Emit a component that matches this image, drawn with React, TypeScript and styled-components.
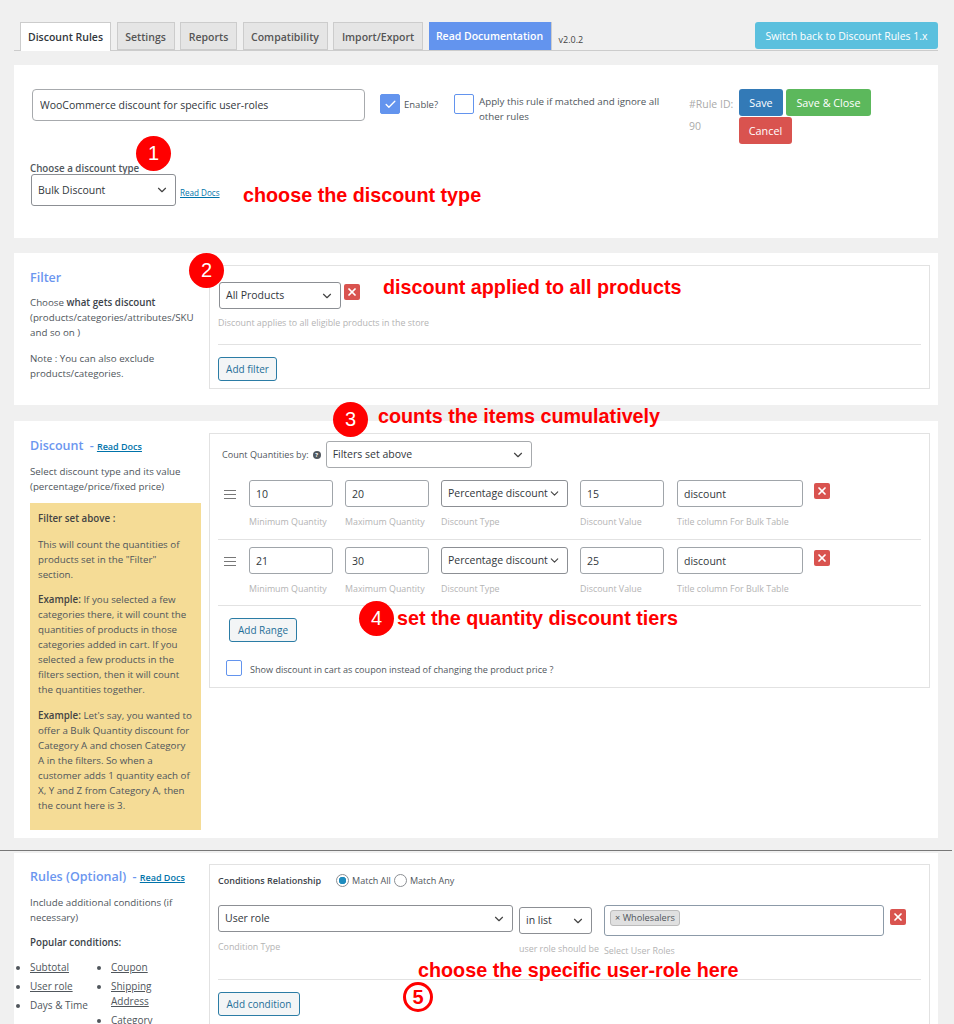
import React from 'react';
import styled, { createGlobalStyle } from 'styled-components';
import { ChevronDown, Check, X } from 'lucide-react';

/*----------- Styles ----------- */
const Global = createGlobalStyle`
  html, body {
    margin: 0;
    padding: 0;
    overflow: hidden;
    background: #f0f0f0;
  }
  * { box-sizing: border-box; }
`;

const Page = styled.div`
  position: relative;
  width: 954px;
  height: 1024px;
  overflow: hidden;
  padding: 22px 16px 0 14px;
  background: #f0f0f0;
  color: #50565c;
  font-family: "Open Sans", "Noto Sans", sans-serif;
  font-size: 9.75px;
  line-height: 15px;
`;

const TabBar = styled.div`
  display: flex;
  align-items: flex-start;
  height: 29px;
  padding-left: 6px;
  border-bottom: 1px solid #ccc;
`;

const Tab = styled.div<{ $active?: boolean; $w: number }>`
  width: ${(p) => p.$w}px;
  height: ${(p) => (p.$active ? 29 : 28)}px;
  margin-right: 5.5px;
  border: 1px solid #ccc;
  border-bottom: ${(p) => (p.$active ? 'none' : '1px solid #ccc')};
  background: ${(p) => (p.$active ? '#fff' : '#e5e5e5')};
  color: ${(p) => (p.$active ? '#32373c' : '#555')};
  font-weight: 600;
  font-size: 10.5px;
  line-height: 28px;
  text-align: center;
  white-space: nowrap;
`;

const DocTab = styled.div`
  width: 123px;
  height: 28px;
  background: #6394ee;
  border-right: 1px solid #ccc;
  color: #fff;
  font-weight: 600;
  font-size: 10.5px;
  line-height: 28px;
  text-align: center;
  white-space: nowrap;
`;

const Version = styled.div`
  margin: 10px 0 0 7px;
  font-size: 9px;
  color: #444;
`;

const SwitchButton = styled.div`
  margin-left: auto;
  width: 183px;
  height: 27px;
  background: #5bc0de;
  border-radius: 3px;
  color: #fff;
  font-size: 10.5px;
  line-height: 28px;
  text-align: center;
  white-space: nowrap;
`;

const Card = styled.section<{ $h: number; $top: number; $pad?: number }>`
  display: flex;
  align-items: flex-start;
  height: ${(p) => p.$h}px;
  margin-top: ${(p) => p.$top}px;
  padding: ${(p) => p.$pad ?? 12}px 8px 0 16px;
  background: #fff;
`;

const TopCard = styled.section`
  height: 173px;
  margin-top: 14px;
  padding: 24px 18px 0 16px;
  background: #fff;
`;

const TopRow = styled.div`
  display: flex;
  align-items: flex-start;
`;

const TitleInput = styled.input`
  width: 333px;
  height: 32px;
  margin-left: 2px;
  padding: 0 7px;
  border: 1px solid #a7aaad;
  border-radius: 4px;
  outline: none;
  color: #32373c;
  font: inherit;
  font-size: 10.5px;
`;

const Tick = styled.span<{ $on?: boolean; $size?: number }>`
  display: inline-flex;
  flex: none;
  align-items: center;
  justify-content: center;
  width: ${(p) => p.$size ?? 20}px;
  height: ${(p) => p.$size ?? 20}px;
  border: 1.5px solid #6394ee;
  border-radius: 2px;
  background: ${(p) => (p.$on ? '#6394ee' : '#fff')};
  color: #fff;
`;

const EnableWrap = styled.div`
  display: flex;
  align-items: center;
  gap: 4px;
  margin: 5px 0 0 15px;
  width: 74px;
  font-size: 9.5px;
`;

const ApplyWrap = styled.div`
  display: flex;
  gap: 5px;
  margin: 5px 0 0 0;
  width: 235px;
`;

const ApplyText = styled.div`
  width: 190px;
  margin-top: 1px;
  line-height: 14.5px;
`;

const RuleId = styled.div`
  width: 50px;
  color: #aaa;
  font-size: 10.5px;
  line-height: 22px;
  padding-top: 4px;
`;

const ActionGrid = styled.div`
  display: flex;
  flex-wrap: wrap;
  gap: 1px 3px;
  width: 140px;
`;

const ActionButton = styled.div<{ $bg: string; $w: number }>`
  width: ${(p) => p.$w}px;
  height: 27px;
  background: ${(p) => p.$bg};
  border-radius: 3px;
  color: #fff;
  font-size: 10.8px;
  line-height: 27px;
  text-align: center;
  white-space: nowrap;
`;

const TypeLabel = styled.div`
  margin-top: 17px;
  font-weight: 600;
  line-height: 15px;
`;

const TypeRow = styled.div`
  display: flex;
  align-items: center;
  margin: -2px 0 0 1px;
`;

const SelectBox = styled.div<{ $w: number; $h?: number; $grey?: boolean }>`
  display: flex;
  flex: none;
  align-items: center;
  justify-content: space-between;
  width: ${(p) => p.$w}px;
  height: ${(p) => p.$h ?? 27}px;
  padding: 0 6px;
  border: 1px solid ${(p) => (p.$grey ? '#a7aaad' : '#8c8f94')};
  border-radius: 3px;
  background: #fff;
  color: #32373c;
  font-size: 10.5px;
  white-space: nowrap;
  svg { flex: none; color: #444; }
`;

const DocLink = styled.a`
  color: #0073aa;
  font-size: 8.1px;
  text-decoration: underline;
`;

const TypeDocLink = styled(DocLink)`
  margin: 5px 0 0 4px;
`;

const LeftCol = styled.div`
  flex: none;
  width: 179px;
`;

const Heading = styled.h3<{ $top?: number }>`
  margin: ${(p) => p.$top ?? 4}px 0 0;
  color: #6b96ef;
  font-size: 12.5px;
  line-height: 18px;
  font-weight: 600;
  white-space: nowrap;
  span { margin-left: 3px; }
  a { font-size: 9px; }
`;

const Para = styled.p<{ $top?: number }>`
  margin: ${(p) => p.$top ?? 11}px 0 0;
  white-space: pre-line;
  b { font-weight: 600; color: #3c434a; }
`;

const Notice = styled.div`
  width: 171px;
  height: 327px;
  margin-top: 9px;
  padding: 8px 8px 0;
  background: #f5dc96;
  p { margin: 0 0 10.7px; }
  b { font-weight: 600; color: #444; }
`;

const Panel = styled.div<{ $h: number }>`
  flex: none;
  width: 721px;
  height: ${(p) => p.$h}px;
  padding: 0 8px;
  border: 1px solid #e2e2e2;
  background: #fff;
`;

const Hint = styled.div<{ $top?: number }>`
  margin-top: ${(p) => p.$top ?? 0}px;
  color: #b4b4b4;
  font-size: 8.9px;
  line-height: 14px;
  white-space: nowrap;
`;

const Divider = styled.div<{ $top: number }>`
  height: 1px;
  margin-top: ${(p) => p.$top}px;
  background: #e2e2e2;
`;

const OutlineButton = styled.div<{ $w: number; $top: number; $left?: number }>`
  width: ${(p) => p.$w}px;
  height: 24px;
  margin: ${(p) => p.$top}px 0 0 ${(p) => p.$left ?? 0}px;
  border: 1px solid #2b7ca5;
  border-radius: 3px;
  background: #f3f5f6;
  color: #1f6f98;
  font-size: 10px;
  line-height: 22px;
  text-align: center;
  white-space: nowrap;
`;

const RemoveButton = styled.div<{ $top?: number }>`
  display: flex;
  flex: none;
  align-items: center;
  justify-content: center;
  width: 16px;
  height: 16px;
  margin-top: ${(p) => p.$top ?? 0}px;
  border-radius: 2px;
  background: #d9534f;
  color: #fff;
`;

const FilterRow = styled.div`
  display: flex;
  align-items: flex-start;
  gap: 3px;
  margin: 16px 0 0 1px;
`;

const CountRow = styled.div`
  display: flex;
  align-items: center;
  margin: 7px 0 0 4px;
`;

const CountLabel = styled.div`
  font-size: 9.1px;
  white-space: nowrap;
`;

const HelpDot = styled.span`
  display: inline-flex;
  flex: none;
  align-items: center;
  justify-content: center;
  width: 8px;
  height: 8px;
  margin: 0 5px 0 4px;
  border-radius: 50%;
  background: #50575e;
  color: #fff;
  font-size: 6px;
  font-weight: 700;
  line-height: 8px;
`;

const RangeRow = styled.div<{ $top: number }>`
  display: flex;
  align-items: flex-start;
  margin-top: ${(p) => p.$top}px;
`;

const Grip = styled.div`
  flex: none;
  width: 12px;
  height: 9px;
  margin: 10px 13px 0 6px;
  border-top: 1px solid #777;
  border-bottom: 1px solid #777;
  position: relative;
  &::after {
    content: '';
    position: absolute;
    left: 0;
    right: 0;
    top: 3px;
    height: 1px;
    background: #777;
  }
`;

const Field = styled.div<{ $w: number; $gap?: number; $pad?: number }>`
  flex: none;
  width: ${(p) => p.$w}px;
  margin-right: ${(p) => p.$gap ?? 12}px;
  padding-top: ${(p) => p.$pad ?? 0}px;
`;

const ValueInput = styled.input`
  display: block;
  width: 100%;
  height: 27px;
  margin-bottom: 8px;
  padding: 0 6px;
  border: 1px solid #a0a5aa;
  border-radius: 3px;
  outline: none;
  color: #32373c;
  font: inherit;
  font-size: 10.5px;
`;

const RangeSelect = styled(SelectBox)`
  margin-bottom: 8px;
`;

const CouponRow = styled.div`
  display: flex;
  align-items: center;
  gap: 8px;
  margin: 17px 0 0 8px;
  font-size: 9.08px;
  span + span { padding-top: 3px; }
`;

const RelationRow = styled.div`
  display: flex;
  align-items: center;
  margin-top: 8px;
  height: 15px;
`;

const RelationLabel = styled.div`
  width: 118px;
  font-weight: 600;
  font-size: 9px;
  color: #3c434a;
  white-space: nowrap;
`;

const Radio = styled.span<{ $on?: boolean }>`
  flex: none;
  width: 13px;
  height: 13px;
  margin-right: 3px;
  border: 1px solid #8c8f94;
  border-radius: 50%;
  background: ${(p) => (p.$on ? 'radial-gradient(circle, #1e8cbe 0 3.5px, #fff 4px)' : '#fff')};
`;

const RadioText = styled.span`
  font-size: 9.05px;
  margin-right: 3px;
  white-space: nowrap;
`;

const ConditionRow = styled.div`
  display: flex;
  align-items: flex-start;
  margin-top: 17px;
`;

const Multi = styled.div`
  width: 280px;
  height: 31px;
  padding: 4px 5px;
  border: 1px solid #8c9aa8;
  border-radius: 3px;
`;

const Chip = styled.span`
  display: inline-block;
  height: 16px;
  padding: 0 4px;
  border: 1px solid #bbb;
  border-radius: 3px;
  background: #e0e0e0;
  font-size: 9.2px;
  line-height: 14px;
`;

const ColumnList = styled.div`
  display: flex;
  margin-top: 10px;
`;

const Bullets = styled.ul<{ $w: number }>`
  width: ${(p) => p.$w}px;
  margin: 0;
  padding: 0;
  font-size: 10px;
  line-height: 14.5px;
  list-style: disc;
  li { margin-bottom: 4.5px; }
  a { color: #50565c; text-decoration: underline; }
`;

const Annotation = styled.div<{ $x: number; $y: number }>`
  position: absolute;
  left: ${(p) => p.$x}px;
  top: ${(p) => p.$y}px;
  color: #f00;
  font-family: "Liberation Sans", Arial, sans-serif;
  font-size: 19.75px;
  font-weight: 700;
  line-height: 24px;
  white-space: nowrap;
`;

const Badge = styled.div<{ $x: number; $y: number }>`
  position: absolute;
  left: ${(p) => p.$x}px;
  top: ${(p) => p.$y}px;
  width: 35px;
  height: 35px;
  border-radius: 50%;
  background: #f00;
  color: #fff;
  font-family: "Liberation Sans", Arial, sans-serif;
  font-size: 20px;
  line-height: 34px;
  text-align: center;
`;

const RingBadge = styled.div`
  position: absolute;
  left: 403px;
  top: 982px;
  width: 30px;
  height: 30px;
  border: 3px solid #f00;
  border-radius: 50%;
  background: #fff;
  color: #f00;
  font-family: "Liberation Sans", Arial, sans-serif;
  font-size: 20px;
  font-weight: 700;
  line-height: 24px;
  text-align: center;
`;

const Rule = styled.div`
  position: absolute;
  left: 0;
  top: 850px;
  width: 952px;
  height: 1px;
  background: #777;
`;

const ranges = [
  { min: '10', max: '20', value: '15', top: 12, after: 10 },
  { min: '21', max: '30', value: '25', top: 7, after: 9 },
];

export default function App() {
  return (
    <>
      <Global />
      <Page>
        <TabBar>
          <Tab $active $w={91}>Discount Rules</Tab>
          <Tab $w={58}>Settings</Tab>
          <Tab $w={57}>Reports</Tab>
          <Tab $w={85}>Compatibility</Tab>
          <Tab $w={90}>Import/Export</Tab>
          <DocTab>Read Documentation</DocTab>
          <Version>v2.0.2</Version>
          <SwitchButton>Switch back to Discount Rules 1.x</SwitchButton>
        </TabBar>

        <TopCard>
          <TopRow>
            <TitleInput defaultValue="WooCommerce discount for specific user-roles" />
            <EnableWrap>
              <Tick $on><Check size={13} strokeWidth={2.5} /></Tick>
              <span>Enable?</span>
            </EnableWrap>
            <ApplyWrap>
              <Tick />
              <ApplyText>Apply this rule if matched and ignore all other rules</ApplyText>
            </ApplyWrap>
            <RuleId>#Rule ID:<br />90</RuleId>
            <ActionGrid>
              <ActionButton $bg="#337ab7" $w={44}>Save</ActionButton>
              <ActionButton $bg="#5cb85c" $w={85}>Save &amp; Close</ActionButton>
              <ActionButton $bg="#d9534f" $w={53}>Cancel</ActionButton>
            </ActionGrid>
          </TopRow>
          <TypeLabel>Choose a discount type</TypeLabel>
          <TypeRow>
            <SelectBox $w={145} $h={32}>
              Bulk Discount
              <ChevronDown size={14} />
            </SelectBox>
            <TypeDocLink>Read Docs</TypeDocLink>
          </TypeRow>
        </TopCard>

        <Card $h={152} $top={15}>
          <LeftCol>
            <Heading>Filter</Heading>
            <Para $top={8}>Choose <b>what gets discount</b>{'\n'}(products/categories/attributes/SKU and so on )</Para>
            <Para>Note : You can also exclude products/categories.</Para>
          </LeftCol>
          <Panel $h={124}>
            <FilterRow>
              <SelectBox $w={122}>
                All Products
                <ChevronDown size={14} />
              </SelectBox>
              <RemoveButton $top={2}><X size={12} strokeWidth={3.5} /></RemoveButton>
            </FilterRow>
            <Hint $top={7}>Discount applies to all eligible products in the store</Hint>
            <Divider $top={14} />
            <OutlineButton $w={59} $top={12}>Add filter</OutlineButton>
          </Panel>
        </Card>

        <Card $h={417} $top={16}>
          <LeftCol>
            <Heading>Discount <span>-</span> <DocLink>Read Docs</DocLink></Heading>
            <Para $top={8}>Select discount type and its value (percentage/price/fixed price)</Para>
            <Notice>
              <p><b>Filter set above :</b></p>
              <p>This will count the quantities of products set in the "Filter" section.</p>
              <p><b>Example:</b> If you selected a few categories there, it will count the quantities of products in those categories added in cart. If you selected a few products in the filters section, then it will count the quantities together.</p>
              <p><b>Example:</b> Let's say, you wanted to offer a Bulk Quantity discount for Category A and chosen Category A in the filters. So when a customer adds 1 quantity each of X, Y and Z from Category A, then the count here is 3.</p>
            </Notice>
          </LeftCol>
          <Panel $h={255}>
            <CountRow>
              <CountLabel>Count Quantities by:</CountLabel>
              <HelpDot>?</HelpDot>
              <SelectBox $w={206} $grey>
                Filters set above
                <ChevronDown size={14} />
              </SelectBox>
            </CountRow>
            {ranges.map((r) => (
              <React.Fragment key={r.min}>
                <RangeRow $top={r.top}>
                  <Grip />
                  <Field $w={84}>
                    <ValueInput defaultValue={r.min} />
                    <Hint>Minimum Quantity</Hint>
                  </Field>
                  <Field $w={84}>
                    <ValueInput defaultValue={r.max} />
                    <Hint>Maximum Quantity</Hint>
                  </Field>
                  <Field $w={127}>
                    <RangeSelect $w={127}>
                      Percentage discount
                      <ChevronDown size={13} />
                    </RangeSelect>
                    <Hint>Discount Type</Hint>
                  </Field>
                  <Field $w={84} $gap={13}>
                    <ValueInput defaultValue={r.value} />
                    <Hint>Discount Value</Hint>
                  </Field>
                  <Field $w={126} $gap={11}>
                    <ValueInput defaultValue="discount" />
                    <Hint>Title column For Bulk Table</Hint>
                  </Field>
                  <RemoveButton $top={3}><X size={12} strokeWidth={3.5} /></RemoveButton>
                </RangeRow>
                <Divider $top={r.after} />
              </React.Fragment>
            ))}
            <OutlineButton $w={68} $top={12} $left={11}>Add Range</OutlineButton>
            <CouponRow>
              <Tick $size={16} />
              <span>Show discount in cart as coupon instead of changing the product price ?</span>
            </CouponRow>
          </Panel>
        </Card>

        <Card $h={171} $top={15} $pad={11}>
          <LeftCol>
            <Heading>Rules (Optional) <span>-</span> <DocLink>Read Docs</DocLink></Heading>
            <Para $top={8}>Include additional conditions (if necessary)</Para>
            <Para $top={10}><b>Popular conditions:</b></Para>
            <ColumnList>
              <Bullets $w={81}>
                <li><a>Subtotal</a></li>
                <li><a>User role</a></li>
                <li>Days &amp; Time</li>
              </Bullets>
              <Bullets $w={70}>
                <li><a>Coupon</a></li>
                <li><a>Shipping Address</a></li>
                <li><a>Category</a></li>
              </Bullets>
            </ColumnList>
          </LeftCol>
          <Panel $h={200}>
            <RelationRow>
              <RelationLabel>Conditions Relationship</RelationLabel>
              <Radio $on />
              <RadioText>Match All</RadioText>
              <Radio />
              <RadioText>Match Any</RadioText>
            </RelationRow>
            <ConditionRow>
              <Field $w={295} $gap={6}>
                <RangeSelect $w={295}>
                  User role
                  <ChevronDown size={14} />
                </RangeSelect>
                <Hint>Condition Type</Hint>
              </Field>
              <Field $w={73} $gap={12} $pad={2}>
                <RangeSelect $w={73}>
                  in list
                  <ChevronDown size={14} />
                </RangeSelect>
                <Hint>user role should be</Hint>
              </Field>
              <Field $w={280} $gap={6}>
                <Multi><Chip>× Wholesalers</Chip></Multi>
                <Hint $top={8}>Select User Roles</Hint>
              </Field>
              <RemoveButton $top={4}><X size={12} strokeWidth={3.5} /></RemoveButton>
            </ConditionRow>
            <Divider $top={21} />
            <OutlineButton $w={82} $top={12}>Add condition</OutlineButton>
          </Panel>
        </Card>

        <Rule />
        <Badge $x={136} $y={136}>1</Badge>
        <Badge $x={189} $y={253}>2</Badge>
        <Badge $x={333} $y={402}>3</Badge>
        <Badge $x={359} $y={601}>4</Badge>
        <RingBadge>5</RingBadge>
        <Annotation $x={243} $y={183}>choose the discount type</Annotation>
        <Annotation $x={383} $y={275}>discount applied to all products</Annotation>
        <Annotation $x={378} $y={404}>counts the items cumulatively</Annotation>
        <Annotation $x={397} $y={606}>set the quantity discount tiers</Annotation>
        <Annotation $x={418} $y={958}>choose the specific user-role here</Annotation>
      </Page>
    </>
  );
}
